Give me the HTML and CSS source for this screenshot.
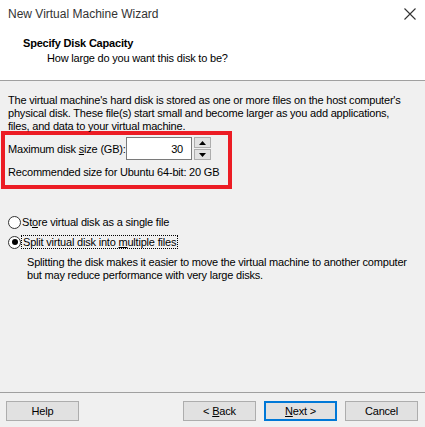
FILE: index.html
```html
<!DOCTYPE html>
<html>
<head>
<meta charset="utf-8">
<link rel="stylesheet" href="styles.css">
</head>
<body>
<div class="window">
  <div class="titlebar">
    <span class="title">New Virtual Machine Wizard</span>
    <svg class="close" width="12" height="12" viewBox="0 0 12 12"><path d="M0.5 0.5 L11.5 11.5 M11.5 0.5 L0.5 11.5" stroke="#333" stroke-width="1.1" fill="none"/></svg>
  </div>
  <div class="header">
    <div class="h-title">Specify Disk Capacity</div>
    <div class="h-sub">How large do you want this disk to be?</div>
  </div>
  <div class="content">
    <p class="intro">The virtual machine's hard disk is stored as one or more files on the host computer's physical disk. These file(s) start small and become larger as you add applications, files, and data to your virtual machine.</p>
    <div class="highlight">
      <div class="size-row">
        <span class="label">Maximum disk <u>s</u>ize (GB):</span>
        <div class="input">30</div>
        <div class="spin">
          <div class="spin-btn"><svg width="7" height="4" viewBox="0 0 7 4"><path d="M3.5 0 L7 4 L0 4 Z" fill="#000"/></svg></div>
          <div class="spin-btn"><svg width="7" height="4" viewBox="0 0 7 4"><path d="M0 0 L7 0 L3.5 4 Z" fill="#000"/></svg></div>
        </div>
      </div>
      <div class="rec">Recommended size for Ubuntu 64-bit: 20 GB</div>
    </div>
    <div class="radios">
      <div class="radio-row"><span class="radio"></span><span>St<u>o</u>re virtual disk as a single file</span></div>
      <div class="radio-row"><span class="radio checked"></span><span class="focus">Split virtual disk into <u>m</u>ultiple files</span></div>
      <p class="desc">Splitting the disk makes it easier to move the virtual machine to another computer but may reduce performance with very large disks.</p>
    </div>
  </div>
  <div class="footer">
    <button class="btn">Help</button>
    <div class="spacer"></div>
    <button class="btn">&lt; <u>B</u>ack</button>
    <button class="btn default"><u>N</u>ext &gt;</button>
    <button class="btn">Cancel</button>
  </div>
</div>
</body>
</html>
```
FILE: styles.css
```css
* { box-sizing: border-box; }
html, body { margin: 0; padding: 0; }
body {
  width: 425px;
  height: 427px;
  overflow: hidden;
  font-family: "Liberation Sans", Arial, sans-serif;
  font-size: 11px;
  letter-spacing: -0.2px;
  color: #000;
  background: #f0f0f0;
}
.window {
  width: 425px;
  height: 427px;
  display: flex;
  flex-direction: column;
}
.titlebar {
  height: 28px;
  background: #fff;
  display: flex;
  align-items: center;
  justify-content: space-between;
  padding: 0 9px 0 8px;
}
.title {
  font-size: 12px;
  letter-spacing: 0;
  color: #333;
}
.close { display: block; }
.header {
  height: 53px;
  background: #fff;
  border-bottom: 1px solid #a0a0a0;
  padding-top: 8px;
}
.h-title {
  font-weight: bold;
  padding-left: 23px;
  line-height: 14px;
}
.h-sub {
  padding-left: 47px;
  line-height: 16px;
}
.content {
  flex: 1;
  padding: 13px 8px 0 8px;
  border-bottom: 1px solid #a0a0a0;
}
.intro {
  margin: 0;
  line-height: 13px;
  width: 404px;
}
.highlight {
  margin: -2px 0 0 -7px;
  width: 231px;
  border: 4px solid #ec1c24;
  padding: 2px 0 6px 3px;
}
.size-row {
  display: flex;
  align-items: center;
  height: 23px;
}
.label { width: 118px; white-space: nowrap; }
.input {
  width: 66px;
  height: 23px;
  background: #fff;
  border: 1px solid #7a7a7a;
  text-align: right;
  padding: 4px 8px 0 0;
  line-height: 14px;
}
.spin {
  margin-left: 2px;
  width: 17px;
  height: 23px;
  display: flex;
  flex-direction: column;
  gap: 1px;
}
.spin-btn {
  flex: 1;
  background: #e1e1e1;
  border: 1px solid #adadad;
  display: flex;
  align-items: center;
  justify-content: center;
}
.spin-btn svg { display: block; }
.rec {
  margin-top: 6px;
  line-height: 13px;
  white-space: nowrap;
}
.radios {
  margin-top: 23px;
}
.radio-row {
  display: flex;
  align-items: center;
  height: 20px;
}
.radio {
  width: 13px;
  height: 13px;
  border-radius: 50%;
  border: 1px solid #333;
  background: #fff;
  margin-right: 1px;
  position: relative;
  flex: none;
}
.radio.checked::after {
  content: "";
  position: absolute;
  left: 2.5px;
  top: 2.5px;
  width: 6px;
  height: 6px;
  border-radius: 50%;
  background: #000;
}
.focus {
  outline: 1px dotted #000;
  outline-offset: 0;
  padding: 0 1px;
}
.desc {
  margin: 4px 0 0 19px;
  line-height: 13px;
  width: 395px;
}
.footer {
  height: 34px;
  display: flex;
  align-items: flex-start;
  padding: 8px 7px 0 6px;
  gap: 8px;
}
.spacer { flex: 1; }
.btn {
  width: 73px;
  height: 20px;
  background: #e1e1e1;
  border: 1px solid #adadad;
  font-family: "Liberation Sans", Arial, sans-serif;
  font-size: 11px;
  letter-spacing: -0.2px;
  color: #000;
  padding: 0;
  margin: 0;
}
.btn.default {
  border: 2px solid #0078d7;
}
```
